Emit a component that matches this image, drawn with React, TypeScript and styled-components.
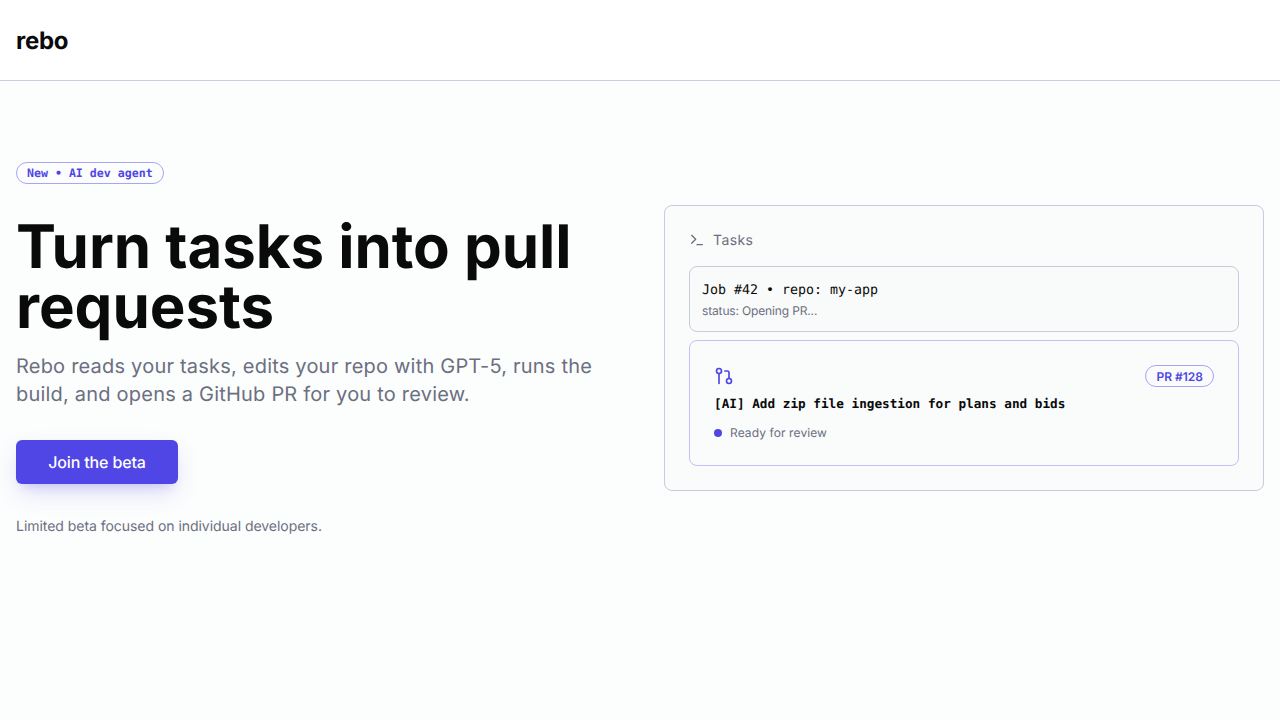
import React from 'react';
import styled, { createGlobalStyle } from 'styled-components';
import { GitPullRequest, Terminal } from 'lucide-react';

const GlobalStyle = createGlobalStyle`
  html, body {
    margin: 0;
    padding: 0;
    background: #fcfdfd;
  }

  * {
    box-sizing: border-box;
  }
`;

const mono = `"DejaVu Sans Mono", "Liberation Mono", monospace`;
const muted = '#6b6f80';

const Page = styled.div`
  min-height: 720px;
  font-family: Inter, "Noto Sans", sans-serif;
  text-rendering: geometricPrecision;
  color: #090a09;
`;

const Header = styled.header`
  height: 81px;
  padding: 0 16px;
  display: flex;
  align-items: center;
  background: #fff;
  border-bottom: 1px solid #cbcbdd;
`;

const Logo = styled.div`
  font-size: 24px;
  font-weight: 700;
  letter-spacing: -0.3px;
`;

const Hero = styled.main`
  display: grid;
  grid-template-columns: 600px 600px;
  gap: 48px;
  align-items: center;
  padding: 81px 16px 0;
`;

const Intro = styled.section`
  display: flex;
  flex-direction: column;
  align-items: flex-start;
`;

const Pill = styled.span<{ $mono?: boolean }>`
  display: inline-flex;
  align-items: center;
  height: 22px;
  padding: 0 10px;
  border: 1px solid #a9a4f5;
  border-radius: 999px;
  color: #4f46e5;
  font-size: ${(p) => (p.$mono ? '11.6px' : '12px')};
  font-weight: 600;
  font-family: ${(p) => (p.$mono ? mono : 'inherit')};
`;

const Heading = styled.h1`
  margin: 33px 0 0;
  font-size: 60px;
  line-height: 60px;
  font-weight: 700;
  letter-spacing: -0.05px;
`;

const Lead = styled.p`
  margin: 15px 0 0;
  font-size: 20px;
  line-height: 28px;
  letter-spacing: 0.21px;
  color: ${muted};
`;

const CtaButton = styled.button`
  margin-top: 32px;
  height: 44px;
  width: 162px;
  border: 0;
  border-radius: 6px;
  background: #4f46e5;
  color: #fff;
  font-family: inherit;
  font-size: 16px;
  font-weight: 500;
  letter-spacing: -0.15px;
  text-rendering: inherit;
  box-shadow: 0 10px 25px -5px rgba(79, 70, 229, 0.25), 0 8px 10px -6px rgba(79, 70, 229, 0.15);
`;

const Note = styled.p`
  margin: 33px 0 0;
  font-size: 14px;
  line-height: 20px;
  letter-spacing: -0.04px;
  color: ${muted};
`;

const Panel = styled.section`
  margin-bottom: 3px;
  padding: 24px;
  background: #fafbfb;
  border: 1px solid #cbcbdd;
  border-radius: 8px;
  display: flex;
  flex-direction: column;
`;

const PanelTitle = styled.div`
  display: flex;
  align-items: center;
  gap: 8px;
  height: 20px;
  margin-bottom: 16px;
  font-size: 14px;
  color: ${muted};
  letter-spacing: 0.4px;
`;

const JobRow = styled.div`
  padding: 12px;
  height: 66px;
  background: #f9fafa;
  border: 1px solid #cbcbdd;
  border-radius: 8px;
`;

const JobLine = styled.div`
  margin-top: 2px;
  font-family: ${mono};
  font-size: 13.3px;
  line-height: 20px;
`;

const JobStatus = styled.div`
  margin-top: 2px;
  font-size: 12px;
  line-height: 16px;
  letter-spacing: -0.15px;
  color: ${muted};
`;

const PrCard = styled.div`
  margin-top: 8px;
  padding: 24px;
  height: 126px;
  background: #fafbfb;
  border: 1px solid #c4c0f5;
  border-radius: 8px;
`;

const PrTop = styled.div`
  display: flex;
  align-items: center;
  justify-content: space-between;
  color: #4f46e5;
`;

const PrTitle = styled.div`
  margin-top: 7px;
  font-family: ${mono};
  font-size: 12.7px;
  line-height: 20px;
  font-weight: 700;
`;

const PrStatus = styled.div`
  margin-top: 11px;
  display: flex;
  align-items: center;
  gap: 8px;
  font-size: 12px;
  line-height: 16px;
  letter-spacing: 0.1px;
  color: ${muted};
`;

const Dot = styled.span`
  width: 8px;
  height: 8px;
  border-radius: 50%;
  background: #4f46e5;
`;

const App: React.FC = () => (
  <Page>
    <GlobalStyle />
    <Header>
      <Logo>rebo</Logo>
    </Header>
    <Hero>
      <Intro>
        <Pill $mono>New • AI dev agent</Pill>
        <Heading>Turn tasks into pull requests</Heading>
        <Lead>Rebo reads your tasks, edits your repo with GPT-5, runs the build, and opens a GitHub PR for you to review.</Lead>
        <CtaButton>Join the beta</CtaButton>
        <Note>Limited beta focused on individual developers.</Note>
      </Intro>
      <Panel>
        <PanelTitle>
          <Terminal size={16} />
          Tasks
        </PanelTitle>
        <JobRow>
          <JobLine>Job #42 • repo: my-app</JobLine>
          <JobStatus>status: Opening PR...</JobStatus>
        </JobRow>
        <PrCard>
          <PrTop>
            <GitPullRequest size={20} />
            <Pill>PR #128</Pill>
          </PrTop>
          <PrTitle>[AI] Add zip file ingestion for plans and bids</PrTitle>
          <PrStatus>
            <Dot />
            Ready for review
          </PrStatus>
        </PrCard>
      </Panel>
    </Hero>
  </Page>
);

export default App;
